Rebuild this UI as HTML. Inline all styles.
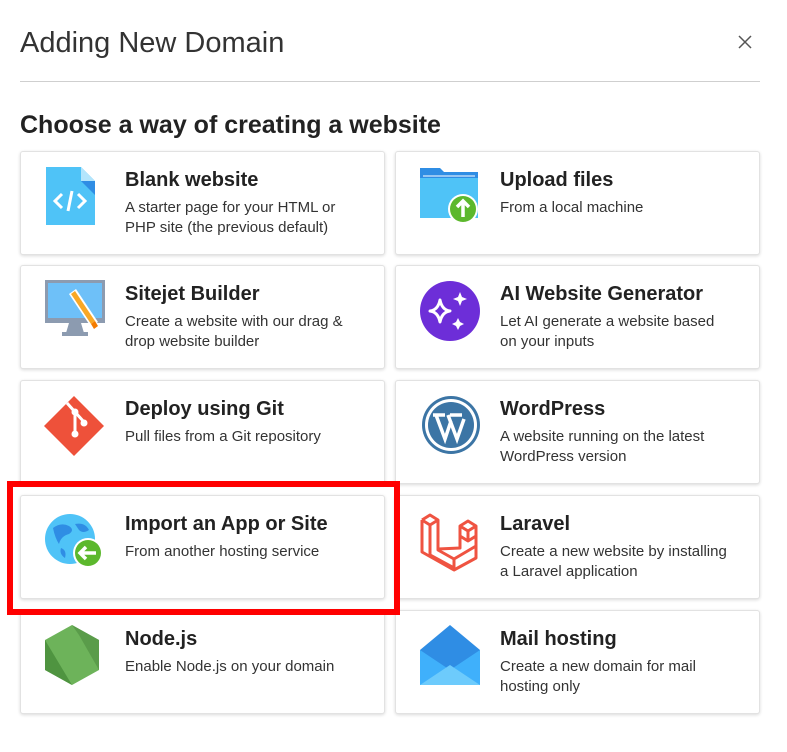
<!DOCTYPE html>
<html><head><meta charset="utf-8"><style>
*{margin:0;padding:0;box-sizing:border-box}
body{width:787px;height:752px;background:#fff;font-family:"Liberation Sans",sans-serif;color:#222;position:relative;overflow:hidden}
.h1{position:absolute;left:20px;top:27px;font-size:29px;color:#333;font-weight:400}
.x{position:absolute;left:736px;top:33px;width:18px;height:18px}
.hr{position:absolute;left:20px;top:81px;width:740px;height:1px;background:#cfcfcf}
.h2{position:absolute;left:20px;top:111px;font-size:25px;font-weight:600;color:#222}
.card{position:absolute;width:365px;height:104px;background:#fff;border:1px solid #e2e2e2;border-radius:3px;box-shadow:0 1px 3px rgba(0,0,0,.15)}
.card svg{position:absolute;left:24px;top:14px;width:60px;height:64px;overflow:visible}
.t{position:absolute;left:104px;top:17px;font-size:20px;font-weight:600;color:#222}
.d{position:absolute;left:104px;top:46px;font-size:15px;line-height:20px;color:#333;width:232px}
.red{position:absolute;left:7px;top:481px;width:393px;height:134px;border:6px solid #f00}
</style></head><body>
<div class="h1">Adding New Domain</div>
<svg class="x" viewBox="0 0 18 18"><path d="M3 3L15 15M15 3L3 15" stroke="#555" stroke-width="1.5"/></svg>
<div class="hr"></div>
<div class="h2">Choose a way of creating a website</div>

<div class="card" style="left:20px;top:151px">
<svg viewBox="0 0 60 64"><path d="M1 1h35l14 14v44H1z" fill="#4fc3f7"/><path d="M36 1l14 14H36z" fill="#b3e5fc"/><path d="M36 15h14v14z" fill="#2f8de4"/><path d="M17 28l-7 7 7 7M33 28l7 7-7 7M27 25l-4 20" stroke="#fff" stroke-width="3" fill="none"/></svg>
<div class="t">Blank website</div><div class="d">A starter page for your HTML or PHP site (the previous default)</div></div>

<div class="card" style="left:395px;top:151px">
<svg viewBox="0 0 60 64"><path d="M0 2h20l4 4h34v46H0z" fill="#2f8de4"/><path d="M0 12h58v40H0z" fill="#4fc3f7"/><path d="M3 10h52" stroke="#fff" stroke-width="1"/><circle cx="43" cy="43" r="15" fill="#fff"/><circle cx="43" cy="43" r="13" fill="#5cb82d"/><path d="M43 51V36M37 41l6-6 6 6" stroke="#fff" stroke-width="3.5" fill="none"/></svg>
<div class="t">Upload files</div><div class="d">From a local machine</div></div>

<div class="card" style="left:20px;top:265px">
<svg viewBox="0 0 60 64"><rect x="0" y="0" width="60" height="43" fill="#8c9bb0"/><rect x="3" y="3" width="54" height="35" fill="#6ec0f8"/><path d="M24 43h12l3 10H21z" fill="#8c9bb0"/><rect x="17" y="52" width="26" height="4" fill="#8c9bb0"/><path d="M24 14l22 33 7-5-22-33z" fill="#fff"/><path d="M26 14l20 30 4-3-20-30z" fill="#f9a825"/><path d="M46 44l4-3 3 5-4 3z" fill="#f57c00"/></svg>
<div class="t">Sitejet Builder</div><div class="d">Create a website with our drag &amp; drop website builder</div></div>

<div class="card" style="left:395px;top:265px">
<svg viewBox="0 0 60 64"><circle cx="30" cy="31" r="30" fill="#6d2ed8"/><path d="M20 20q2 10 10 11q-8 1-10 11q-2-10-10-11q8-1 10-11z" fill="none" stroke="#fff" stroke-width="3" stroke-linejoin="round"/><path d="M40 12l2 5 5 2-5 2-2 5-2-5-5-2 5-2z M38 38l2 4 4 2-4 2-2 4-2-4-4-2 4-2z" fill="#fff"/></svg>
<div class="t">AI Website Generator</div><div class="d">Let AI generate a website based on your inputs</div></div>

<div class="card" style="left:20px;top:380px">
<svg viewBox="0 0 60 64"><path d="M30 0l30 30-30 30L0 30z" fill="#ee513a" transform="translate(-1 1)"/><path d="M22 8l8 9v21M30 17l9 10" stroke="#fff" stroke-width="3" fill="none"/><circle cx="30" cy="17" r="3.5" fill="#fff"/><circle cx="39" cy="28" r="3.5" fill="#fff"/><circle cx="30" cy="39" r="3.5" fill="#fff"/></svg>
<div class="t">Deploy using Git</div><div class="d">Pull files from a Git repository</div></div>

<div class="card" style="left:395px;top:380px">
<svg viewBox="0 0 60 64"><circle cx="31" cy="30" r="29" fill="#3c75a5"/><circle cx="31" cy="30" r="26" fill="#fff"/><circle cx="31" cy="30" r="23" fill="#3c75a5"/><path d="M13 20h12M30 20h12M16 20l9 24 6-18M28 20l9 24 7-20" stroke="#fff" stroke-width="3.5" fill="none"/></svg>
<div class="t">WordPress</div><div class="d">A website running on the latest WordPress version</div></div>

<div class="card" style="left:20px;top:495px">
<svg viewBox="0 0 60 64"><circle cx="25" cy="29" r="25" fill="#4fc3f7"/><path d="M8 18q8-6 16-2 6 4 0 8-8 2-10 10-4-6-6-16zM30 14q10-2 14 6-6 4-10 0zM16 38q6 2 4 10-6-4-4-10z" fill="#2f8de4"/><circle cx="43" cy="43" r="15" fill="#fff"/><circle cx="43" cy="43" r="13" fill="#5cb82d"/><path d="M51 43H36M41 37l-6 6 6 6" stroke="#fff" stroke-width="3.5" fill="none"/></svg>
<div class="t">Import an App or Site</div><div class="d">From another hosting service</div></div>

<div class="card" style="left:395px;top:495px">
<svg viewBox="0 0 60 64"><g fill="none" stroke="#ef5341" stroke-width="3" stroke-linejoin="round"><path d="M2 10l8-5 8 5v30l16 9 22-13V26"/><path d="M2 10v32l32 18 22-12V36M2 10l8 5 8-5M10 15v30l24 13V49M40 16l8-5 8 5v10l-8 5-8-5zM40 16l8 5 8-5M48 21v10M40 26v12l-22 1"/></g></svg>
<div class="t">Laravel</div><div class="d">Create a new website by installing a Laravel application</div></div>

<div class="card" style="left:20px;top:610px">
<svg viewBox="0 0 60 64"><path d="M27 0l27 15v30L27 60 0 45V15z" fill="#6db35a"/><path d="M27 0l27 15v30L34 10z" fill="#5a9c4a"/><path d="M0 15l27 45L0 45z" fill="#4f9440"/></svg>
<div class="t">Node.js</div><div class="d">Enable Node.js on your domain</div></div>

<div class="card" style="left:395px;top:610px">
<svg viewBox="0 0 60 64"><path d="M30 0l30 25v35H0V25z" fill="#2f8de4"/><path d="M0 25l30 20 30-20v35H0z" fill="#3fb0fb"/><path d="M0 60l30-20 30 20z" fill="#6dcbfc"/></svg>
<div class="t">Mail hosting</div><div class="d">Create a new domain for mail hosting only</div></div>

<div class="red"></div>
</body></html>
